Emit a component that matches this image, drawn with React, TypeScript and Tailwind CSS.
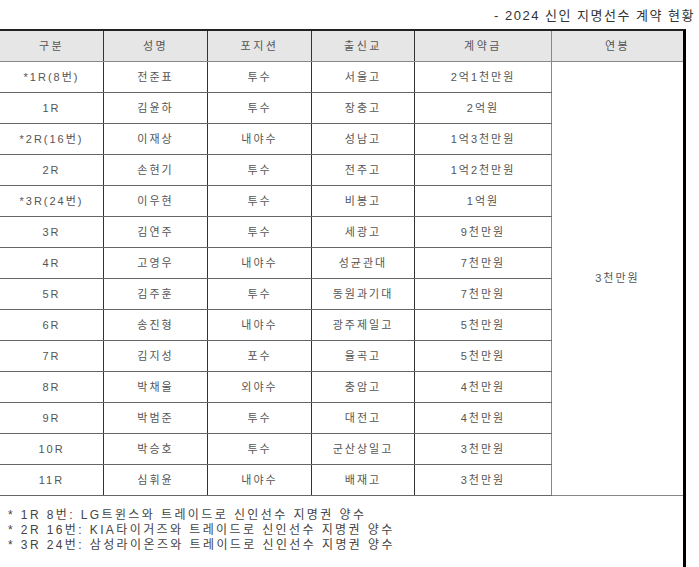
import React from "react";

const rows = [
  ["*1R(8번)", "전준표", "투수", "서울고", "2억1천만원"],
  ["1R", "김윤하", "투수", "장충고", "2억원"],
  ["*2R(16번)", "이재상", "내야수", "성남고", "1억3천만원"],
  ["2R", "손현기", "투수", "전주고", "1억2천만원"],
  ["*3R(24번)", "이우현", "투수", "비봉고", "1억원"],
  ["3R", "김연주", "투수", "세광고", "9천만원"],
  ["4R", "고영우", "내야수", "성균관대", "7천만원"],
  ["5R", "김주훈", "투수", "동원과기대", "7천만원"],
  ["6R", "송진형", "내야수", "광주제일고", "5천만원"],
  ["7R", "김지성", "포수", "율곡고", "5천만원"],
  ["8R", "박채울", "외야수", "충암고", "4천만원"],
  ["9R", "박범준", "투수", "대전고", "4천만원"],
  ["10R", "박승호", "투수", "군산상일고", "3천만원"],
  ["11R", "심휘윤", "내야수", "배재고", "3천만원"],
];

const widths = ["w-[104px]", "w-[104px]", "w-[104px]", "w-[103px]", "w-[137px]"];
const headers = ["구분", "성명", "포지션", "출신교", "계약금"];

const notes = [
  "* 1R 8번: LG트윈스와 트레이드로 신인선수 지명권 양수",
  "* 2R 16번: KIA타이거즈와 트레이드로 신인선수 지명권 양수",
  "* 3R 24번: 삼성라이온즈와 트레이드로 신인선수 지명권 양수",
];

export default function App() {
  return (
    <div className="w-[699px] h-[567px] bg-white overflow-hidden font-['Liberation_Sans','Noto_Sans_CJK_KR',sans-serif]">
      <div className="h-[29px] flex items-center justify-end pr-[4px] pt-[2px] text-[13px] tracking-[1.5px] text-[#333]">
        - 2024 신인 지명선수 계약 현황
      </div>

      <div className="w-[686px] border-t-2 border-t-[#222] border-r-[3px] border-r-black">
        <div className="flex h-[31px] bg-[#e6e6e6] border-b border-b-[#888] text-[11px] tracking-[2.5px] text-[#555]">
          {headers.map((h, i) => (
            <div
              key={h}
              className={`${widths[i]} flex items-center justify-center border-r ${i === 4 ? "border-r-[#888]" : "border-r-[#333]"}`}
            >
              {h}
            </div>
          ))}
          <div className="flex-1 flex items-center justify-center">연봉</div>
        </div>

        <div className="flex text-[11px] tracking-[2px] text-[#555]">
          <div className="flex flex-col">
            {rows.map((r) => (
              <div key={r[0]} className="flex h-[31px] border-b border-b-[#666]">
                {r.map((c, i) => (
                  <div
                    key={i}
                    className={`${widths[i]} flex items-center justify-center border-r ${i === 4 ? "border-r-[#888]" : "border-r-[#333]"}`}
                  >
                    {c}
                  </div>
                ))}
              </div>
            ))}
          </div>
          <div className="flex-1 flex items-center justify-center border-b border-b-[#888]">3천만원</div>
        </div>

        <div className="h-[80px] pt-[12px] pl-[8px] text-[12px] tracking-[2.4px] leading-[15px] text-[#444]">
          {notes.map((n) => (
            <div key={n}>{n}</div>
          ))}
        </div>
      </div>
    </div>
  );
}
